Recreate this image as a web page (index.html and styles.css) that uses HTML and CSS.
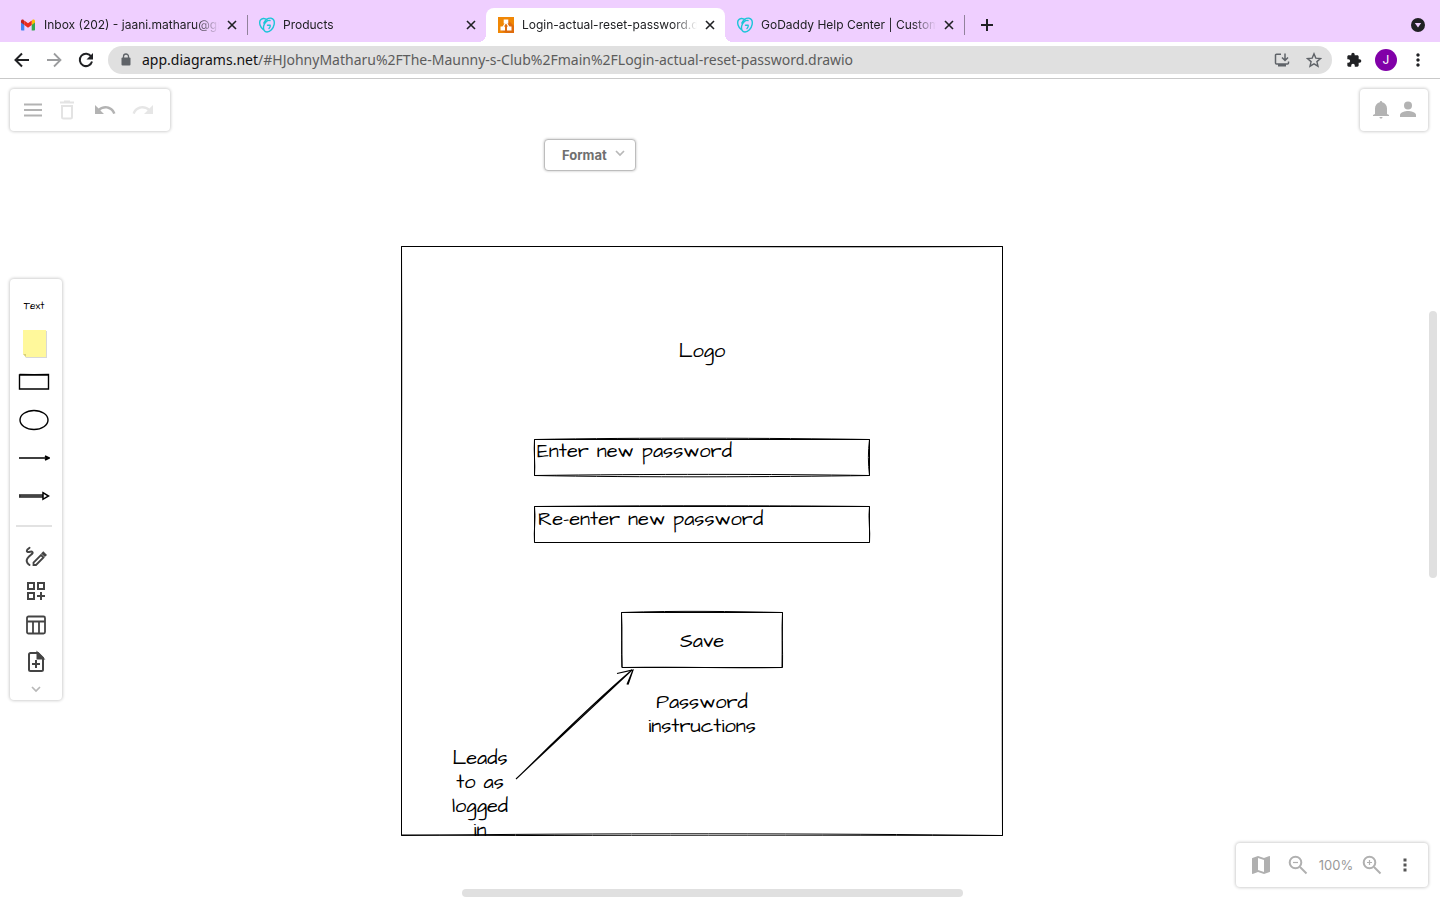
FILE: index.html
```html
<!DOCTYPE html>
<html lang="en">
<head>
<meta charset="utf-8">
<title>Login-actual-reset-password.drawio</title>
<link rel="stylesheet" href="styles.css">
</head>
<body>
<svg class="defs" aria-hidden="true">
  <symbol id="close" viewBox="0 0 16 16"><path d="M4 4l8 8M12 4l-8 8" stroke="currentColor" stroke-width="1.600" fill="none"/></symbol>
  <symbol id="heart" viewBox="0 0 16 16"><g fill="none" stroke="#1bc5d8" stroke-width="1.400" stroke-linecap="round" stroke-linejoin="round"><path d="M4.200 12.500C1 10 0 6 1.200 3.400 2.500 1 5.800.8 8 2.800"/><path d="M11 3.500C8.500 2.800 5.500 5.500 4.700 8.800c-.8 3.700.8 6.200 3.300 6.200 3.200 0 6.300-3.300 7.100-7.300C15.800 4 14.500 1.500 12 1.200 8.500.9 6 3.500 4.800 6"/><path d="M8.500 8.200h2.700c.3 1.500-.2 2.500-1.200 3.300"/></g></symbol>
  <symbol id="dots" viewBox="0 0 24 24"><path d="M12 8c1.100 0 2-.9 2-2s-.9-2-2-2-2 .9-2 2 .9 2 2 2zm0 2c-1.100 0-2 .9-2 2s.9 2 2 2 2-.9 2-2-.9-2-2-2zm0 6c-1.100 0-2 .9-2 2s.9 2 2 2 2-.9 2-2-.9-2-2-2z" fill="currentColor"/></symbol>
  <symbol id="chevron" viewBox="0 0 10 8"><path d="M1 2l4 4 4-4" fill="none" stroke="currentColor" stroke-width="1.700"/></symbol>
</svg>

<header class="browser">
  <nav class="tabs" aria-label="Browser tabs">
    <div class="tab">
      <svg class="i16" viewBox="0 0 16 16"><path d="M1 4v8.500c0 .6.400 1 1 1h2.300V7z" fill="#4285f4"/><path d="M15 4v8.500c0 .6-.4 1-1 1h-2.300V7z" fill="#34a853"/><path d="M11.700 4.200V8L15 5.500V4c0-1.500-1.500-2-2.500-1.200z" fill="#fbbc04"/><path d="M1 4v1.500L4.300 8V4.200L3.500 2.800C2.500 2 1 2.500 1 4z" fill="#c5221f"/><path d="M4.300 3.500L8 6.300l3.700-2.800V8L8 10.800 4.300 8z" fill="#ea2a1f"/></svg>
      <button class="tab-title">Inbox (202) - jaani.matharu@gmail.com</button>
      <button class="tab-close" aria-label="Close Inbox"><svg class="i16"><use href="#close"/></svg></button>
    </div>
    <div class="tab divided">
      <svg class="i16"><use href="#heart"/></svg>
      <button class="tab-title">Products</button>
      <button class="tab-close" aria-label="Close Products"><svg class="i16"><use href="#close"/></svg></button>
    </div>
    <div class="tab active">
      <svg class="i16" viewBox="0 0 16 16"><path d="M0 0h16v16H0z" fill="#f08705"/><path d="M9.500 2.500L16 9v7H8l-5-2.500z" fill="#df6c0c"/><path d="M7.500 6L4.700 10.500M8.500 6l2.800 4.500" stroke="#fff" stroke-width="1.300"/><path d="M5.700 2.500h4.600v4H5.700zM2.500 9.500H7v4H2.500zM9 9.500h4.500v4H9z" fill="#fff"/></svg>
      <button class="tab-title">Login-actual-reset-password.drawio</button>
      <button class="tab-close" aria-label="Close Login"><svg class="i16"><use href="#close"/></svg></button>
    </div>
    <div class="tab">
      <svg class="i16"><use href="#heart"/></svg>
      <button class="tab-title">GoDaddy Help Center | Customer Support</button>
      <button class="tab-close" aria-label="Close GoDaddy"><svg class="i16"><use href="#close"/></svg></button>
    </div>
    <button class="new-tab" aria-label="New tab"><svg class="i16" viewBox="0 0 16 16"><path d="M8 2v12M2 8h12" stroke="#202124" stroke-width="2"/></svg></button>
    <button class="tab-search" aria-label="Search tabs"><svg class="i16" viewBox="0 0 16 16"><circle cx="8" cy="8" r="7" fill="#202124"/><path d="M4.800 6h6.400L8 10.500z" fill="#efcfff"/></svg></button>
  </nav>
  <div class="toolbar">
    <button class="tool" aria-label="Back"><svg class="i16" viewBox="0 0 16 16"><path d="M15 8H2M8 1.500L1.500 8 8 14.500" fill="none" stroke="#202124" stroke-width="2"/></svg></button>
    <button class="tool" aria-label="Forward"><svg class="i16" viewBox="0 0 16 16"><path d="M1 8h13M8 1.500L14.500 8 8 14.500" fill="none" stroke="#9b9c9e" stroke-width="1.800"/></svg></button>
    <button class="tool" aria-label="Reload"><svg class="i16" viewBox="0 0 16 16"><path d="M13.200 4.500A6.200 6.200 0 1 0 14 9.500" fill="none" stroke="#202124" stroke-width="2"/><path d="M15 1v6.500H8.500z" fill="#202124"/></svg></button>
    <div class="address">
      <svg class="i16" viewBox="0 0 16 16"><path d="M4.500 5.500h7a1 1 0 0 1 1 1v6a1 1 0 0 1-1 1h-7a1 1 0 0 1-1-1v-6a1 1 0 0 1 1-1z" fill="#5f6368"/><path d="M5.500 6V4.500a2.500 2.500 0 0 1 5 0V6" fill="none" stroke="#5f6368" stroke-width="1.300"/></svg>
      <a class="url" href="#"><span class="host">app.diagrams.net</span>/#HJohnyMatharu%2FThe-Maunny-s-Club%2Fmain%2FLogin-actual-reset-password.drawio</a>
      <button class="tool" aria-label="Install"><svg class="i16" viewBox="0 0 16 16"><path d="M7 2.200H2.500a1 1 0 0 0-1 1V11a1 1 0 0 0 1 1h11a1 1 0 0 0 1-1V9.500M11 1.500v6M8 5.500l3 3 3-3" fill="none" stroke="#5f6368" stroke-width="1.500"/><path d="M4 12h8v2.500H4z" fill="#5f6368"/></svg></button>
      <button class="tool" aria-label="Bookmark"><svg class="i16" viewBox="0 0 16 16"><path d="M8 1.800l1.800 4.300 4.700.4-3.600 3.100 1.100 4.600L8 11.800l-4 2.400 1.100-4.600L1.500 6.500l4.700-.4z" fill="none" stroke="#5f6368" stroke-width="1.400"/></svg></button>
    </div>
    <button class="tool" aria-label="Extensions"><svg class="i16" viewBox="0 0 24 24"><path d="M20.500 11H19V7c0-1.100-.9-2-2-2h-4V3.500a2.500 2.500 0 0 0-5 0V5H4c-1.100 0-2 .9-2 2v3.800h1.500a2.700 2.700 0 0 1 0 5.400H2V20c0 1.100.9 2 2 2h3.800v-1.500a2.700 2.700 0 0 1 5.400 0V22H17c1.100 0 2-.9 2-2v-4h1.500a2.500 2.500 0 0 0 0-5z" fill="#202124"/></svg></button>
    <button class="tool" aria-label="Profile"><span class="avatar">J</span></button>
    <button class="tool" aria-label="Menu"><svg class="i20"><use href="#dots"/></svg></button>
  </div>
</header>

<main class="workspace">
  <section class="diagram" aria-label="Diagram">
    <svg class="sketch" viewBox="0 0 602 590" fill="none" stroke="#000">
      <path d="M.5.500C200-.1 420 1.500 601.500.500M.5.500L601.500.500M.5.500C1.500 200-1 400 .5 589.500M.5.500L.5 589.500M601.500.500C602.500 120 600.500 320 601.500 589.500M601.500.500L601.500 589.500M.5 589.500C200 587 420 587.500 601.500 589.500M.5 589C200 590 420 590 601.500 589.500"/>
      <path d="M133.500 193.500C240 191.500 370 192 468.500 193.500M133.500 193.500L468.500 193.500M133.500 229.500C240 231.500 370 231 468.500 229.500M133.500 229.500C250 228 370 228 468.500 229.500M133.500 193.500C132.500 205 134.500 218 133.500 229.500M133.500 193.500V229.500M468.500 193.500C467 205 467 218 468.500 229.500M468.500 193.500V229.500"/>
      <path d="M133.500 260.500C240 259.500 370 259.500 468.500 260.500M133.500 260.500H468.500V296.500H133.500zM133.500 260.500C135 272 132.500 285 133.500 296.500M468.500 260.500C467 272 469.500 285 468.500 296.500"/>
      <path d="M220.500 366.500C280 364.500 330 365.500 381.500 366.500M220.500 366.500H381.500L381 421.500H221zM220.500 366.500C221.500 385 220 405 221 421.500M381.500 366.500C380.500 385 382 405 381.500 421.500M221 421.500C280 420.500 330 422.500 381.500 421.500"/>
      <path d="M115 533C150 500 190 463 231 424M115 533C157 492 193 456 231 424" stroke-width="1.100"/>
      <path d="M216 427.500L232 424L226 438.500M216 427.500L231 424M227 438.500L232 424" stroke-width="1.200"/>
    </svg>
    <p class="label logo">Logo</p>
    <p class="label field-new">Enter new password</p>
    <p class="label field-again">Re-enter new password</p>
    <p class="label save">Save</p>
    <p class="label hint">Password instructions</p>
    <p class="label note">Leads to as logged in</p>
  </section>

  <div class="panel actions">
    <button class="menu" aria-label="Menu"><svg class="i24" viewBox="0 0 24 24"><path d="M3 6.500h18M3 12h18M3 17.500h18" stroke="#b3b3b3" stroke-width="2"/></svg></button>
    <button aria-label="Delete"><svg class="i24" viewBox="0 0 24 24"><path d="M5 4.500h14M9 3.500h6M7 8h10v11a1.500 1.500 0 0 1-1.500 1.500h-7A1.500 1.500 0 0 1 7 19z" fill="none" stroke="#e3e3e3" stroke-width="2"/></svg></button>
    <button aria-label="Undo"><svg class="i24" viewBox="0 0 24 24"><path d="M12.500 8c-2.650 0-5.050 1-6.900 2.600L2 7v9h9l-3.620-3.620c1.390-1.160 3.160-1.880 5.120-1.880 3.540 0 6.550 2.310 7.600 5.500l2.370-.780C21.080 11.030 17.150 8 12.500 8z" fill="#b3b3b3"/></svg></button>
    <button aria-label="Redo"><svg class="i24" viewBox="0 0 24 24"><path d="M18.400 10.600C16.550 9 14.150 8 11.500 8c-4.650 0-8.580 3.030-9.960 7.220L3.900 16c1.050-3.190 4.050-5.500 7.600-5.500 1.950 0 3.730.720 5.120 1.880L13 16h9V7z" fill="#e6e6e6"/></svg></button>
  </div>

  <div class="panel account">
    <button aria-label="Notifications"><svg class="i20" viewBox="0 0 20 20"><path d="M10 1a1.200 1.200 0 0 1 1.200 1.200C14 3 16 5 16 8.500V14l2 1v1H2v-1l2-1V8.500C4 5 6 3 8.800 2.200A1.200 1.200 0 0 1 10 1zM8.500 17h3c0 1-.7 1.500-1.500 1.500S8.500 18 8.500 17z" fill="#b3b3b3"/></svg></button>
    <button aria-label="User"><svg class="i20" viewBox="0 0 20 20"><circle cx="10" cy="5.500" r="4" fill="#b3b3b3"/><path d="M2 17v-2c0-2.700 5.300-4 8-4s8 1.300 8 4v2z" fill="#b3b3b3"/></svg></button>
  </div>

  <button class="format">Format <svg class="chev"><use href="#chevron"/></svg></button>

  <aside class="panel shapes" aria-label="Shapes">
    <button class="shape mini">Text</button>
    <button class="shape" aria-label="Note"><svg class="s32" viewBox="0 0 32 32"><path d="M6 3h23v27H8l-2-3z" fill="#d8d8d8"/><path d="M5 2h23v27H8l-3-3z" fill="#fff89b"/><path d="M5 26h3v3z" fill="#d8d07a"/></svg></button>
    <button class="shape" aria-label="Rectangle"><svg class="s32" viewBox="0 0 32 32"><path d="M1.500 9L30.500 8.500v14.500L1.500 23zM1.500 8.500L30.500 9M1.500 23C10 22.500 20 23.500 30.500 23" fill="none" stroke="#000" stroke-width="1.400"/></svg></button>
    <button class="shape" aria-label="Ellipse"><svg class="s32" viewBox="0 0 32 32"><ellipse cx="16" cy="16" rx="14" ry="9.500" fill="none" stroke="#000" stroke-width="1.400"/></svg></button>
    <button class="shape" aria-label="Line"><svg class="s32" viewBox="0 0 32 32"><path d="M1 16h30M27 14l4 2-4 2" fill="none" stroke="#000" stroke-width="1.700"/></svg></button>
    <button class="shape" aria-label="Arrow"><svg class="s32" viewBox="0 0 32 32"><path d="M1 16h24" stroke="#333" stroke-width="3.600"/><path d="M3 16h21" stroke="#555" stroke-width="1"/><path d="M25 12.700l5.500 3.300-5.500 3.300z" fill="#fff" stroke="#000" stroke-width="1.500"/></svg></button>
    <hr>
    <button class="insert" aria-label="Freehand"><svg class="i24" viewBox="0 0 24 24" fill="none" stroke="#444" stroke-width="2"><path d="M5.500 2.800C1.500 5 2.500 7.500 5 7c3.500-1.200 5 .3 2 2.800C3.500 12.500 2 14 2.800 16.500 3.300 18.500 4 19.500 5.500 20" stroke-linecap="round"/><path d="M9.500 20v-2.500l7.500-7.500 2.500 2.500L12 20z" stroke-width="1.800"/><path d="M19.300 6.200l3.700 3.700-2.200 2.200-3.700-3.700z" fill="#444" stroke="none"/></svg></button>
    <button class="insert" aria-label="Shapes"><svg class="i24" viewBox="0 0 24 24" fill="none" stroke="#444" stroke-width="2"><path d="M4 4h6v6H4zM14 4h6v6h-6zM4 14h6v6H4zM17 13v8M13 17h8"/></svg></button>
    <button class="insert" aria-label="Table"><svg class="i24" viewBox="0 0 24 24" fill="none" stroke="#444" stroke-width="1.800"><rect x="3" y="3.500" width="18" height="17" rx="1.500"/><path d="M3 8.500h18M9 9v11M15 9v11"/></svg></button>
    <button class="insert last" aria-label="Template"><svg class="i24" viewBox="0 0 24 24" fill="none" stroke="#444" stroke-width="2"><path d="M14 3H6.500A1.500 1.500 0 0 0 5 4.500v15A1.500 1.500 0 0 0 6.500 21h11a1.500 1.500 0 0 0 1.500-1.500V8zM12 10v8M8 14h8"/><path d="M13.500 3v5.500H19z" fill="#444"/></svg></button>
    <button class="more" aria-label="More"><svg class="chev"><use href="#chevron"/></svg></button>
  </aside>

  <div class="panel zoom">
    <button class="outline" aria-label="Outline"><svg class="i24" viewBox="0 0 24 24"><path d="M20.500 3l-.16.030L15 5.100 9 3 3.360 4.900c-.210.070-.360.250-.360.480V20.500c0 .280.220.500.500.500l.160-.030L9 18.900l6 2.100 5.640-1.900c.210-.070.360-.250.360-.480V3.500c0-.280-.220-.500-.500-.500zM15 19l-6-2.110V5l6 2.110V19z" fill="#b0b0b0"/></svg></button>
    <button class="out" aria-label="Zoom out"><svg class="i24" viewBox="0 0 24 24" fill="none" stroke="#b0b0b0" stroke-width="2"><circle cx="9.500" cy="9.500" r="5.800"/><path d="M14 14l6.500 6.500"/><path d="M7 9.500h5" stroke-width="1.200"/></svg></button>
    <button class="percent">100%</button>
    <button class="in" aria-label="Zoom in"><svg class="i24" viewBox="0 0 24 24" fill="none" stroke="#b0b0b0" stroke-width="2"><circle cx="9.500" cy="9.500" r="5.800"/><path d="M14 14l6.500 6.500"/><path d="M7 9.500h5M9.500 7v5" stroke-width="1.200"/></svg></button>
    <button class="options" aria-label="Options"><svg class="i20" viewBox="0 0 20 20"><path d="M8.500 3.500h3v3h-3zM8.500 8.500h3v3h-3zM8.500 13.500h3v3h-3z" fill="#555"/></svg></button>
  </div>

  <div class="scroll vertical"></div>
  <div class="scroll horizontal"></div>
</main>
</body>
</html>
```
FILE: styles.css
```css
* { box-sizing: border-box; }
body {
  margin: 0;
  height: 100vh;
  display: flex;
  flex-direction: column;
  overflow: hidden;
  background: #fff;
  color: #202124;
  font-family: Inter, "Liberation Sans", sans-serif;
}
button {
  margin: 0;
  padding: 0;
  border: 0;
  background: none;
  color: inherit;
  font: inherit;
}
svg { display: block; flex: none; }
.defs { position: absolute; width: 0; height: 0; }
.i16 { width: 16px; height: 16px; }
.i20 { width: 20px; height: 20px; }
.i24 { width: 24px; height: 24px; }
.s32 { width: 32px; height: 32px; }
.chev { width: 10px; height: 8px; color: #b8b8b8; }

.tabs {
  display: flex;
  align-items: flex-end;
  height: 42px;
  padding: 0 14px 0 8px;
  background: #efcfff;
}
.tab {
  position: relative;
  display: flex;
  align-items: center;
  flex: 0 1 239px;
  min-width: 0;
  height: 34px;
  padding: 0 7px 0 12px;
}
.tab-title {
  flex: 1;
  min-width: 0;
  margin: 0 5px 0 8px;
  overflow: hidden;
  white-space: nowrap;
  text-align: left;
  font-size: 12px;
  line-height: 18px;
  -webkit-mask-image: linear-gradient(to left, transparent, #000 24px);
  mask-image: linear-gradient(to left, transparent, #000 24px);
}
.divided::before,
.new-tab::before {
  content: "";
  position: absolute;
  left: 0;
  top: 7px;
  width: 1px;
  height: 20px;
  background: #91829b;
}
.active { background: #fff; border-radius: 8px 8px 0 0; }
.active::before,
.active::after {
  content: "";
  position: absolute;
  bottom: 0;
  width: 8px;
  height: 8px;
}
.active::before { left: -8px; background: radial-gradient(circle at 0 0, transparent 8px, #fff 8px); }
.active::after { right: -8px; background: radial-gradient(circle at 100% 0, transparent 8px, #fff 8px); }
.new-tab {
  position: relative;
  display: grid;
  place-items: center;
  width: 46px;
  height: 34px;
}
.tab-search { display: grid; place-items: center; height: 34px; margin-left: auto; }

.toolbar {
  display: flex;
  align-items: center;
  height: 37px;
  padding: 0 6px;
  border-bottom: 1px solid #c9c9c9;
}
.tool { display: grid; place-items: center; flex: none; width: 32px; height: 28px; }
.address {
  display: flex;
  align-items: center;
  flex: 1;
  min-width: 0;
  height: 28px;
  margin: 0 6px;
  padding: 0 2px 0 10px;
  border-radius: 14px;
  background: #e0e0e0;
}
.url {
  flex: 1;
  min-width: 0;
  margin-left: 8px;
  overflow: hidden;
  white-space: nowrap;
  color: #5c5c5c;
  text-decoration: none;
  font-family: "Noto Sans", "Liberation Sans", sans-serif;
  font-size: 14px;
  line-height: 20px;
}
.host { color: #111; }
.avatar {
  width: 22px;
  height: 22px;
  border-radius: 50%;
  background: #8100a8;
  color: #fff;
  font-size: 12px;
  line-height: 22px;
  text-align: center;
}

.workspace { position: relative; flex: 1; min-height: 0; overflow: hidden; }

.diagram { position: absolute; left: 401px; top: 167px; width: 602px; height: 590px; }
.label {
  position: absolute;
  margin: 0;
  color: #000;
  font-family: "Architects Daughter", "Open Sans", sans-serif;
  font-size: 20px;
  line-height: 24px;
  text-align: center;
}
.logo { left: 241px; top: 93px; width: 120px; }
.field-new { left: 136px; top: 193px; }
.field-again { left: 137px; top: 261px; }
.save { left: 221px; top: 383px; width: 160px; }
.hint { left: 241px; top: 444px; width: 120px; }
.note { left: 49px; top: 500px; width: 60px; height: 90px; overflow: hidden; }

.panel {
  position: absolute;
  display: flex;
  align-items: center;
  border-radius: 4px;
  background: #fff;
  box-shadow: 0 0 3px 1px #d1d1d1;
}
.panel button { display: grid; place-items: center; }
.actions { left: 10px; top: 10px; height: 42px; padding: 0 8px; }
.actions button { width: 38px; }
.actions .menu { width: 30px; }
.account { right: 12px; top: 10px; height: 42px; padding: 0 10px 0 11px; gap: 7px; }
.format {
  position: absolute;
  left: 544px;
  top: 60px;
  display: flex;
  align-items: center;
  gap: 8px;
  height: 32px;
  padding: 0 10px 0 17px;
  border: 1px solid #bdbdbd;
  border-radius: 4px;
  background: #fff;
  box-shadow: 0 0 2px 1px #e0e0e0;
  color: #707070;
  font-size: 13px;
  font-weight: 700;
}
.format .chev { margin-bottom: 4px; }
.shapes { left: 10px; top: 200px; width: 52px; flex-direction: column; padding: 8px 0 3px; }
.shape { width: 48px; height: 38px; padding-right: 4px; }
.mini {
  color: #000;
  font-family: "Architects Daughter", "Open Sans", sans-serif;
  font-size: 10px;
}
.shapes hr { width: 36px; height: 2px; margin: 10px 6px 13px; border: 0; align-self: flex-start; background: #e2e2e2; }
.insert { width: 48px; height: 34px; }
.last { height: 39px; }
.more { width: 48px; height: 16px; }
.zoom { right: 12px; bottom: 13px; height: 44px; padding: 0 7px; }
.outline { width: 36px; }
.out, .percent { width: 38px; }
.percent { color: #999; font-size: 13px; }
.in { width: 34px; }
.options { width: 32px; }

.scroll { position: absolute; border-radius: 4px; background: #e0e0e0; }
.vertical { right: 3px; top: 232px; width: 8px; height: 267px; }
.horizontal { left: 462px; bottom: 3px; width: 501px; height: 8px; }
```
